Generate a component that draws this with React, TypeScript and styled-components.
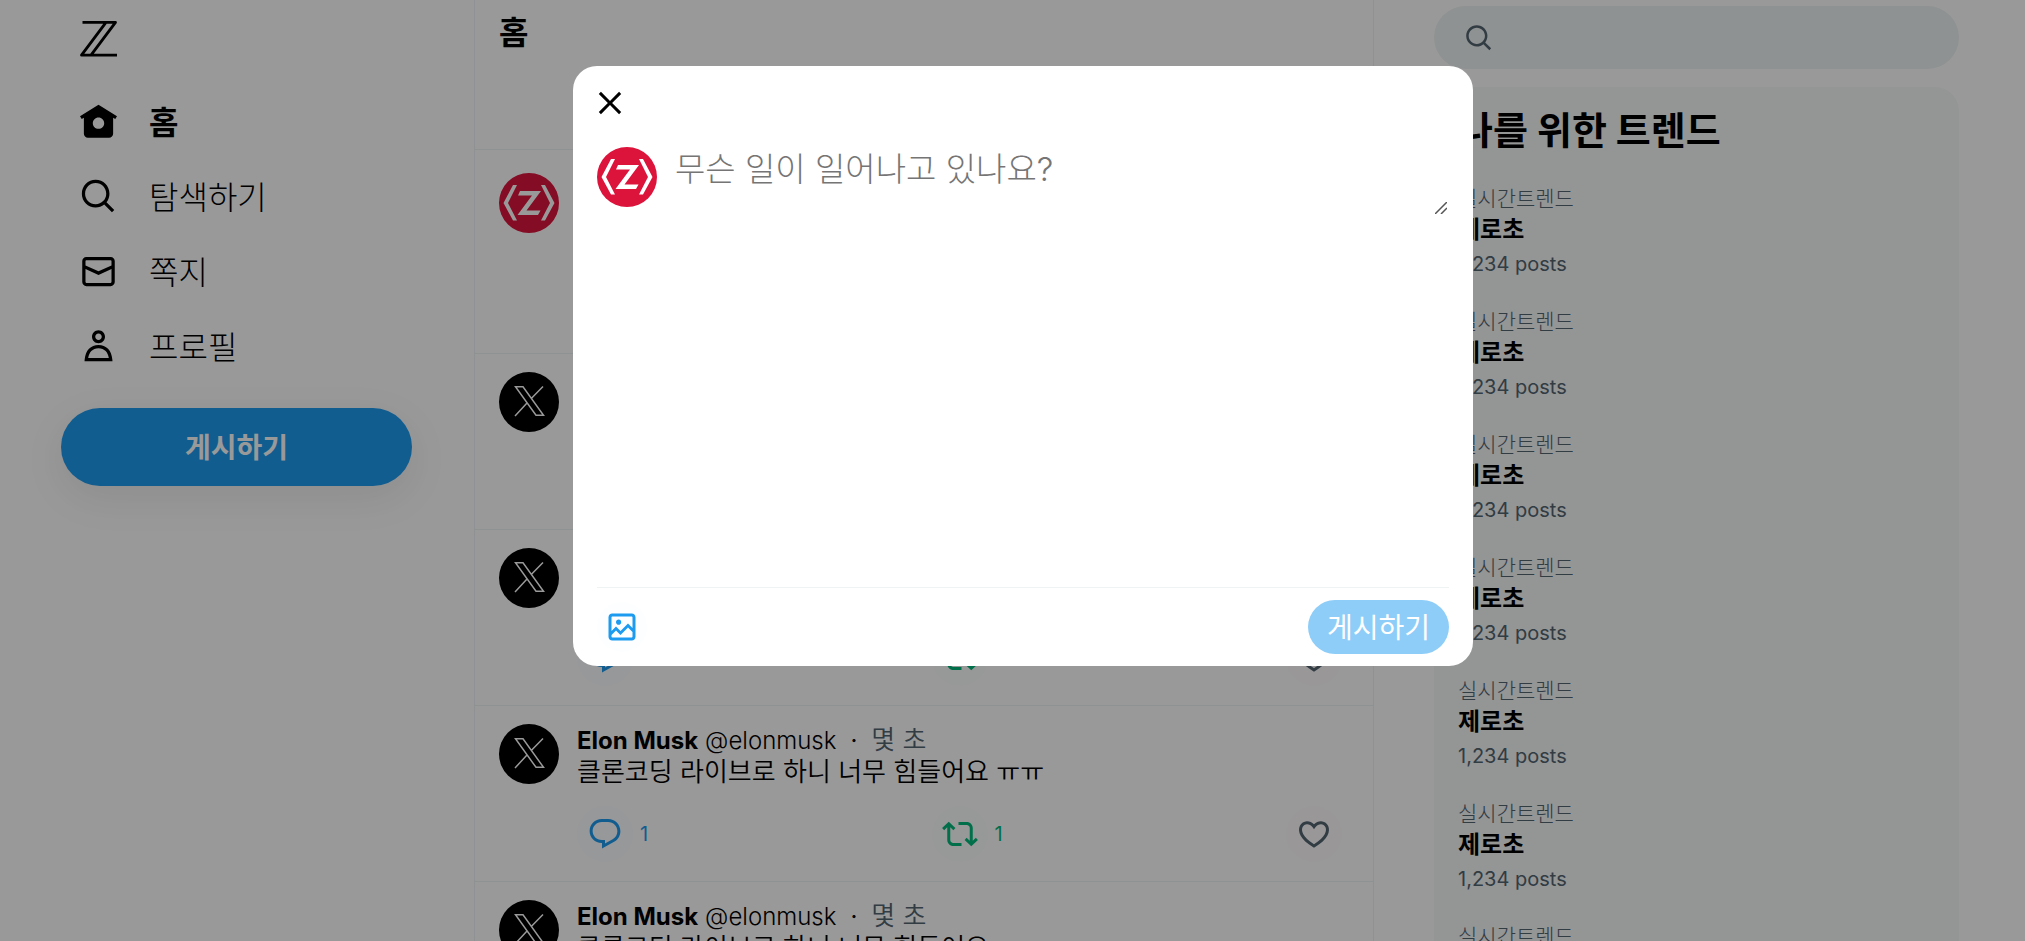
import React from "react";
import styled, { createGlobalStyle, css } from "styled-components";

const GlobalStyle = createGlobalStyle`
  *, *::before, *::after { box-sizing: border-box; }
  body {
    margin: 0;
    background: #fff;
    color: #000;
    font-family: Inter, "Noto Sans CJK KR", sans-serif;
  }
  button, input, textarea { font: inherit; }
  h1, h2, p, ul { margin: 0; padding: 0; }
  ul { list-style: none; }
`;

const blue = "rgb(29, 155, 240)";
const grey = "rgb(83, 100, 113)";
const line = "rgb(239, 243, 244)";

const Page = styled.div`
  display: flex;
  height: 100vh;
  overflow: hidden;
`;

const Side = styled.header`
  flex: 1 1 408px;
  display: flex;
  justify-content: flex-end;
`;

const SideInner = styled.div`
  flex: none;
  width: 413px;
`;

const LogoLink = styled.a`
  display: flex;
  align-items: center;
  height: 78px;
  margin-bottom: 6px;
  padding-left: 18px;
`;

const NavItem = styled.a<{ $active?: boolean }>`
  display: flex;
  align-items: center;
  gap: 31px;
  height: 75px;
  padding-left: 18px;
  color: #000;
  text-decoration: none;
  font-size: 32px;
  line-height: 36px;
  font-weight: ${(p) => (p.$active ? 700 : 300)};
`;

const NavLabel = styled.span`
  padding-top: 3px;
`;

const SidePost = styled.button`
  width: 351px;
  height: 78px;
  margin-top: 24px;
  padding: 0 0 2px;
  border: 0;
  border-radius: 39px;
  background: ${blue};
  color: #fff;
  font-size: 28px;
  font-weight: 700;
  box-shadow: 0 12px 42px rgba(0, 0, 0, 0.08);
`;

const Content = styled.div`
  flex: 1 1 1485px;
`;

const ContentInner = styled.div`
  display: flex;
  justify-content: space-between;
  width: 1485px;
`;

const Feed = styled.main`
  width: 900px;
  min-height: 100vh;
  border: solid ${line};
  border-width: 0 1px;
`;

const FeedHeader = styled.div`
  height: 150px;
  padding: 12px 24px;
  border-bottom: 1px solid ${line};
`;

const FeedTitle = styled.h1`
  font-size: 32px;
  line-height: 42px;
  font-weight: 700;
`;

const Row = styled.article<{ $tall?: boolean }>`
  display: flex;
  gap: 18px;
  min-height: ${(p) => (p.$tall ? 204 : 176)}px;
  padding: ${(p) => (p.$tall ? 23 : 18)}px 18px 18px 24px;
  border-bottom: 1px solid ${line};
`;

const Avatar = styled.svg`
  flex: none;
  width: 60px;
  height: 60px;
  border-radius: 50%;
`;

const PostBody = styled.div`
  flex: 1;
  font-size: 24px;
  line-height: 32px;
`;

const PostMeta = styled.div`
  display: flex;
  align-items: baseline;
  height: 32px;
`;

const Author = styled.a`
  margin-right: 7px;
  color: #000;
  text-decoration: none;
  font-weight: 700;
`;

const Handle = styled.span`
  font-weight: 300;
`;

const Dot = styled.span`
  margin: 0 14px;
`;

const Time = styled.span`
  color: ${grey};
  font-size: 26px;
  font-weight: 350;
`;

const PostText = styled.p`
  font-size: 26px;
  font-weight: 350;
`;

const Actions = styled.div`
  display: flex;
  justify-content: space-between;
  margin-top: 18px;
`;

const Action = styled.button<{ $tint: string; $ring: string }>`
  display: flex;
  align-items: center;
  gap: 7px;
  min-width: 69px;
  padding: 0;
  border: 0;
  background: none;
  color: ${(p) => p.$tint};
  font-size: 20px;
  line-height: 24px;

  span {
    display: grid;
    place-items: center;
    width: 56px;
    height: 56px;
    border-radius: 50%;
    background: ${(p) => p.$ring};
  }
`;

const Aside = styled.aside`
  width: 525px;
`;

const SearchBox = styled.label`
  display: flex;
  align-items: center;
  gap: 24px;
  height: 63px;
  margin-top: 6px;
  padding: 0 30px;
  border-radius: 32px;
  background: ${line};
  color: ${grey};

  input {
    flex: 1;
    min-width: 0;
    border: 0;
    outline: 0;
    background: none;
    font-size: 24px;
  }
`;

const Trends = styled.section`
  margin-top: 18px;
  border-radius: 24px;
  background: rgb(247, 249, 249);
`;

const TrendsTitle = styled.h2`
  padding: 18px 24px;
  font-size: 38px;
  line-height: 50px;
  font-weight: 700;
`;

const Trend = styled.li`
  height: 123px;
  padding: 11px 24px;
`;

const TrendNote = styled.div<{ $korean?: boolean }>`
  color: ${grey};
  font-size: ${(p) => (p.$korean ? 21 : 20)}px;
  line-height: ${(p) => (p.$korean ? 30 : 36)}px;
  font-weight: ${(p) => (p.$korean ? 300 : 400)};
`;

const TrendName = styled.div`
  font-size: 24px;
  line-height: 32px;
  font-weight: 700;
`;

const Overlay = styled.div`
  position: fixed;
  inset: 0;
  display: flex;
  justify-content: center;
  align-items: flex-start;
  padding: 66px 0 0 21px;
  background: rgba(0, 0, 0, 0.4);
`;

const Dialog = styled.section`
  display: flex;
  flex-direction: column;
  width: 900px;
  height: 600px;
  border-radius: 24px;
  background: #fff;
`;

const iconButton = css`
  display: grid;
  place-items: center;
  width: 50px;
  height: 50px;
  padding: 0;
  border: 0;
  border-radius: 50%;
`;

const Close = styled.button`
  ${iconButton}
  margin: 12px 0 0 12px;
  background: none;
  color: #000;
`;

const Compose = styled.div`
  flex: 1;
  display: flex;
  gap: 18px;
  padding: 19px 24px;
`;

const InputWrap = styled.div`
  position: relative;
  flex: 1;
  height: 68px;

  textarea {
    display: block;
    width: 100%;
    height: 100%;
    padding: 0;
    border: 0;
    outline: 0;
    resize: none;
    overflow: hidden;
    font-size: 33px;
    line-height: 44px;
    font-weight: 300;
    color: #000;
  }
  textarea::placeholder { color: #757575; }
`;

const Grip = styled.svg`
  position: absolute;
  right: 2px;
  bottom: 1px;
  width: 12px;
  height: 12px;
`;

const Footer = styled.div`
  display: flex;
  align-items: center;
  justify-content: space-between;
  height: 79px;
  margin: 0 24px;
  border-top: 1px solid ${line};
`;

const ImageButton = styled.button`
  ${iconButton}
  background: rgba(29, 155, 240, 0.01);
  color: ${blue};
`;

const Submit = styled.button`
  width: 141px;
  height: 54px;
  padding: 0 0 2px;
  border: 0;
  border-radius: 27px;
  background: rgb(142, 205, 248);
  color: #fff;
  font-size: 28px;
`;

const paths = {
  home: "M12 1.696L.622 8.807l1.06 1.696L3 9.679V19.5C3 20.881 4.119 22 5.5 22h13c1.381 0 2.5-1.119 2.5-2.5V9.679l1.318.824 1.06-1.696L12 1.696zM12 16.5c-1.933 0-3.5-1.567-3.5-3.5s1.567-3.5 3.5-3.5 3.5 1.567 3.5 3.5-1.567 3.5-3.5 3.5z",
  search: "M10.25 3.75c-3.59 0-6.5 2.91-6.5 6.5s2.91 6.5 6.5 6.5c1.795 0 3.419-.726 4.596-1.904 1.178-1.177 1.904-2.801 1.904-4.596 0-3.59-2.91-6.5-6.5-6.5zm-8.5 6.5c0-4.694 3.806-8.5 8.5-8.5s8.5 3.806 8.5 8.5c0 1.986-.682 3.815-1.824 5.262l4.781 4.781-1.414 1.414-4.781-4.781c-1.447 1.142-3.276 1.824-5.262 1.824-4.694 0-8.5-3.806-8.5-8.5z",
  mail: "M1.998 5.5c0-1.381 1.119-2.5 2.5-2.5h15c1.381 0 2.5 1.119 2.5 2.5v13c0 1.381-1.119 2.5-2.5 2.5h-15c-1.381 0-2.5-1.119-2.5-2.5v-13zm2.5-.5c-.276 0-.5.224-.5.5v2.764l8 3.638 8-3.636V5.5c0-.276-.224-.5-.5-.5h-15zm15.5 5.463l-8 3.636-8-3.638V18.5c0 .276.224.5.5.5h15c.276 0 .5-.224.5-.5v-8.037z",
  profile: "M5.651 19h12.698c-.337-1.8-1.023-3.21-1.945-4.19C15.318 13.65 13.838 13 12 13s-3.317.65-4.404 1.81c-.922.98-1.608 2.39-1.945 4.19zm.486-5.56C7.627 11.85 9.648 11 12 11s4.373.85 5.863 2.44c1.477 1.58 2.366 3.8 2.632 6.46l.11 1.1H3.395l.11-1.1c.266-2.66 1.155-4.88 2.632-6.46zM12 4c-1.105 0-2 .9-2 2s.895 2 2 2 2-.9 2-2-.895-2-2-2zM8 6c0-2.21 1.791-4 4-4s4 1.79 4 4-1.791 4-4 4-4-1.79-4-4z",
  comment: "M1.751 10c0-4.42 3.584-8 8.005-8h4.366c4.49 0 8.129 3.64 8.129 8.13 0 2.96-1.607 5.68-4.196 7.11l-8.054 4.46v-3.69h-.067c-4.49.1-8.183-3.51-8.183-8.01zm8.005-6c-3.317 0-6.005 2.69-6.005 6 0 3.37 2.77 6.08 6.138 6.01l.351-.01h1.761v2.3l5.087-2.81c1.951-1.08 3.163-3.13 3.163-5.36 0-3.39-2.744-6.13-6.129-6.13H9.756z",
  repost: "M4.5 3.88l4.432 4.14-1.364 1.46L5.5 7.55V16c0 1.1.896 2 2 2H13v2H7.5c-2.209 0-4-1.79-4-4V7.55L1.432 9.48.068 8.02 4.5 3.88zM16.5 6H11V4h5.5c2.209 0 4 1.79 4 4v8.45l2.068-1.93 1.364 1.46-4.432 4.14-4.432-4.14 1.364-1.46 2.068 1.93V8c0-1.1-.896-2-2-2z",
  heart: "M16.697 5.5c-1.222-.06-2.679.51-3.89 2.16l-.805 1.09-.806-1.09C9.984 6.01 8.526 5.44 7.304 5.5c-1.243.07-2.349.78-2.91 1.91-.552 1.12-.633 2.78.479 4.82 1.074 1.97 3.257 4.27 7.129 6.61 3.87-2.34 6.052-4.64 7.126-6.61 1.111-2.04 1.03-3.7.477-4.82-.561-1.13-1.666-1.84-2.908-1.91zm4.187 7.69c-1.351 2.48-4.001 5.12-8.379 7.67l-.503.3-.504-.3c-4.379-2.55-7.029-5.19-8.382-7.67-1.36-2.5-1.41-4.86-.514-6.67.887-1.79 2.647-2.91 4.601-3.01 1.651-.09 3.368.56 4.798 2.01 1.429-1.45 3.146-2.1 4.796-2.01 1.954.1 3.714 1.22 4.601 3.01.896 1.81.846 4.17-.514 6.67z",
  close: "M10.59 12L4.54 5.96l1.42-1.42L12 10.59l6.04-6.05 1.42 1.42L13.41 12l6.05 6.04-1.42 1.42L12 13.41l-6.04 6.05-1.42-1.42L10.59 12z",
  image: "M3 5.5C3 4.119 4.119 3 5.5 3h13C19.881 3 21 4.119 21 5.5v13c0 1.381-1.119 2.5-2.5 2.5h-13C4.119 21 3 19.881 3 18.5v-13zM5.5 5c-.276 0-.5.224-.5.5v9.086l3-3 3 3 5-5 3 3V5.5c0-.276-.224-.5-.5-.5h-13zM19 15.414l-3-3-5 5-3-3-3 3V18.5c0 .276.224.5.5.5h13c.276 0 .5-.224.5-.5v-3.086zM9.75 7C8.784 7 8 7.784 8 8.75s.784 1.75 1.75 1.75 1.75-.784 1.75-1.75S10.716 7 9.75 7z",
};

function Icon({ name, size = 36 }: { name: keyof typeof paths; size?: number }) {
  return (
    <svg width={size} height={size} viewBox="0 0 24 24" fill="currentColor" aria-hidden="true">
      <path d={paths[name]} />
    </svg>
  );
}

function Logo() {
  return (
    <svg width="38" height="38" viewBox="0 0 38 38" fill="none" stroke="#000" strokeWidth="2.8" aria-hidden="true">
      <path d="M3.500 2.400H36.500L12 35.200M38 35.200H2.500L27 2.400" strokeLinejoin="round" />
    </svg>
  );
}

function MyAvatar() {
  return (
    <Avatar viewBox="0 0 60 60" role="img" aria-label="zerocho">
      <rect width="60" height="60" fill="#dc143c" />
      <g fill="#fff">
        <path d="M14 12h4L9 30l9 17.500h-4L4.500 30z" />
        <path d="M46 12h-4l9 18-9 17.500h4L55.500 30z" />
        <path d="M21 18h21L27.500 37.500h14L39 42H18.500L33 22.500H19z" />
      </g>
    </Avatar>
  );
}

function XAvatar() {
  return (
    <Avatar viewBox="0 0 60 60" role="img" aria-label="elonmusk">
      <rect width="60" height="60" fill="#000" />
      <path
        d="M16.500 14.800h7.500l20.500 28.500h-7.500zM44 14.500L32 26.800M28 31L16 44"
        fill="none"
        stroke="#fff"
        strokeWidth="1.500"
      />
    </Avatar>
  );
}

const nav = [
  { icon: "home", label: "홈", active: true },
  { icon: "search", label: "탐색하기" },
  { icon: "mail", label: "쪽지" },
  { icon: "profile", label: "프로필" },
] as const;

function Post() {
  return (
    <Row>
      <XAvatar />
      <PostBody>
        <PostMeta>
          <Author href="#">Elon Musk</Author>
          <Handle>@elonmusk</Handle>
          <Dot>·</Dot>
          <Time>몇 초</Time>
        </PostMeta>
        <PostText>클론코딩 라이브로 하니 너무 힘들어요 ㅠㅠ</PostText>
        <Actions>
          <Action $tint={blue} $ring="rgba(29, 155, 240, 0.02)" aria-label="답글">
            <span><Icon name="comment" /></span>1
          </Action>
          <Action $tint="rgb(0, 186, 124)" $ring="rgba(0, 186, 124, 0.01)" aria-label="재게시">
            <span><Icon name="repost" /></span>1
          </Action>
          <Action $tint={grey} $ring="rgba(249, 24, 128, 0.01)" aria-label="좋아요">
            <span><Icon name="heart" /></span>
          </Action>
        </Actions>
      </PostBody>
    </Row>
  );
}

export default function App() {
  return (
    <>
      <GlobalStyle />
      <Page>
        <Side>
          <SideInner>
            <LogoLink href="#" aria-label="Z"><Logo /></LogoLink>
            <nav>
              {nav.map((item) => (
                <NavItem key={item.label} href="#" $active={"active" in item}>
                  <Icon name={item.icon} size={39} />
                  <NavLabel>{item.label}</NavLabel>
                </NavItem>
              ))}
            </nav>
            <SidePost>게시하기</SidePost>
          </SideInner>
        </Side>
        <Content>
          <ContentInner>
            <Feed>
              <FeedHeader>
                <FeedTitle>홈</FeedTitle>
              </FeedHeader>
              <Row $tall><MyAvatar /></Row>
              {[1, 2, 3, 4].map((id) => <Post key={id} />)}
            </Feed>
            <Aside>
              <SearchBox>
                <Icon name="search" size={30} />
                <input type="search" aria-label="검색" />
              </SearchBox>
              <Trends>
                <TrendsTitle>나를 위한 트렌드</TrendsTitle>
                <ul>
                  {[1, 2, 3, 4, 5, 6, 7, 8].map((id) => (
                    <Trend key={id}>
                      <TrendNote $korean>실시간트렌드</TrendNote>
                      <TrendName>제로초</TrendName>
                      <TrendNote>1,234 posts</TrendNote>
                    </Trend>
                  ))}
                </ul>
              </Trends>
            </Aside>
          </ContentInner>
        </Content>
      </Page>
      <Overlay>
        <Dialog role="dialog" aria-modal="true" aria-label="게시하기">
          <Close aria-label="닫기"><Icon name="close" /></Close>
          <Compose>
            <MyAvatar />
            <InputWrap>
              <textarea aria-label="게시글" placeholder="무슨 일이 일어나고 있나요?" />
              <Grip viewBox="0 0 12 12" aria-hidden="true">
                <path d="M0 12L12 0M6 12L12 6" stroke="#555" strokeWidth="1.500" />
              </Grip>
            </InputWrap>
          </Compose>
          <Footer>
            <ImageButton aria-label="이미지"><Icon name="image" /></ImageButton>
            <Submit disabled>게시하기</Submit>
          </Footer>
        </Dialog>
      </Overlay>
    </>
  );
}
